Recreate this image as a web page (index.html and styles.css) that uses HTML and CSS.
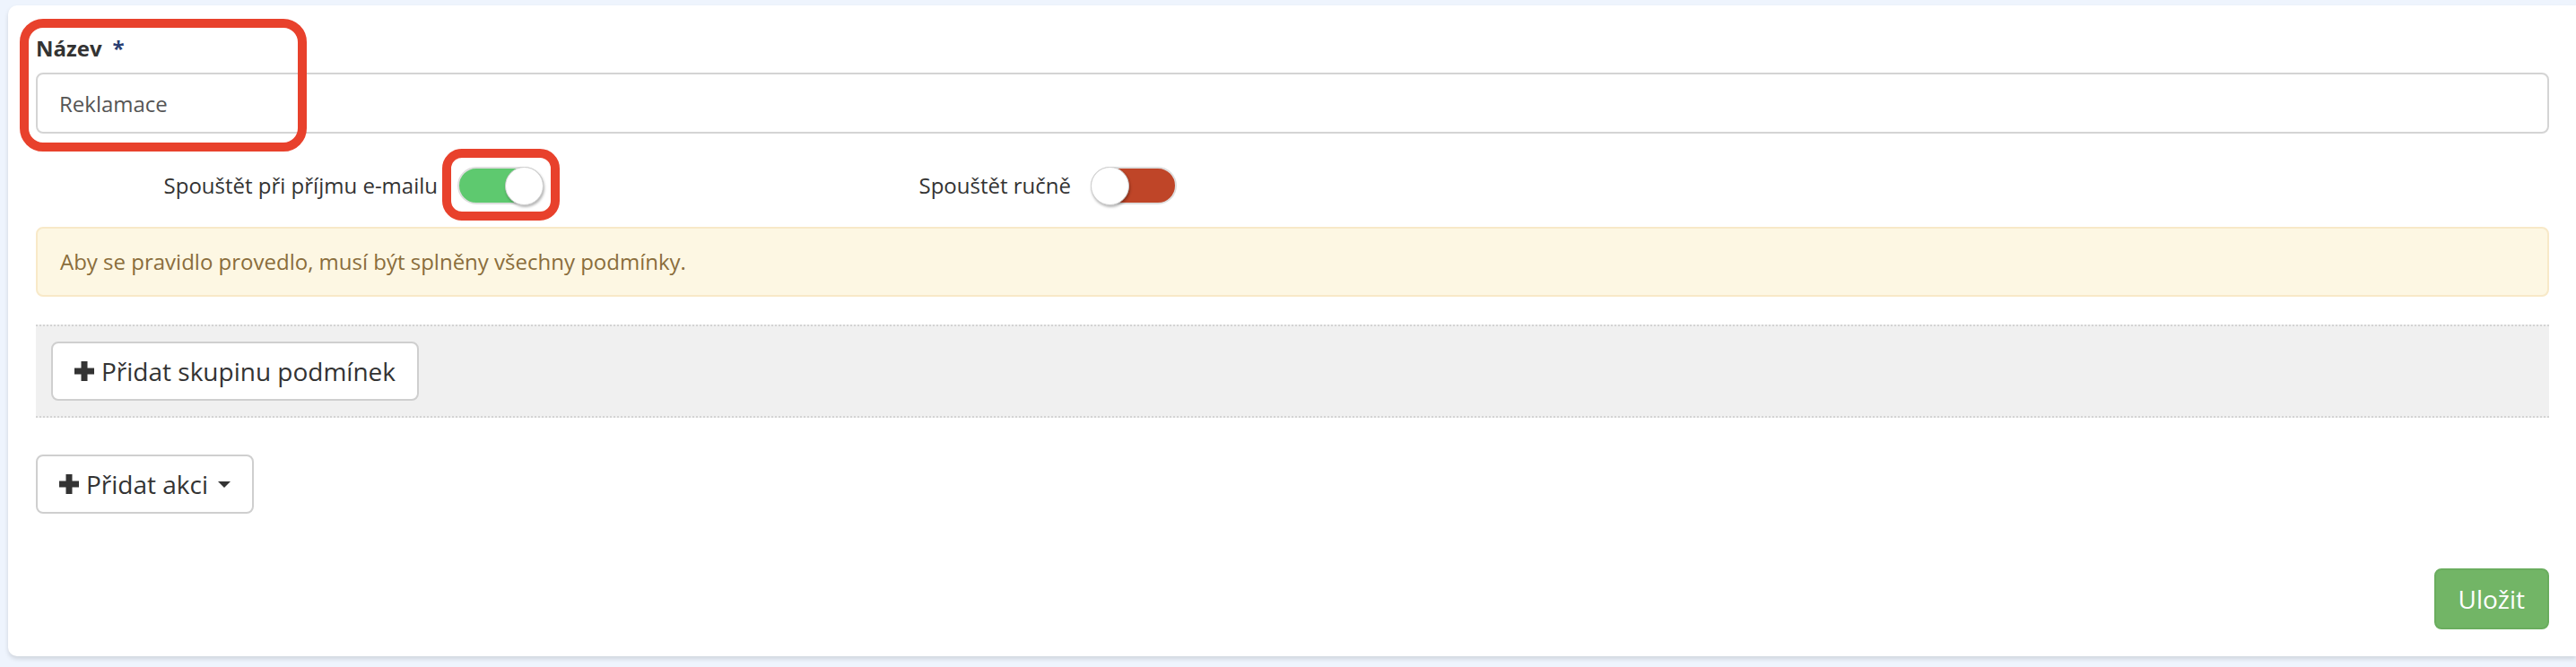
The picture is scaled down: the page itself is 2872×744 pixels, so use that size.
FILE: index.html
```html
<!DOCTYPE html>
<html lang="cs">
<head>
<meta charset="utf-8">
<title>Pravidlo</title>
<link rel="stylesheet" href="styles.css">
</head>
<body>
<div class="page">
  <div class="topline"></div>
  <div class="card">
    <div class="field">
      <label class="field-label">Název<span class="req">*</span></label>
      <input class="text-input" type="text" value="Reklamace">
    </div>

    <div class="switch-row">
      <div class="switch-group">
        <span class="switch-label">Spouštět při příjmu e-mailu</span>
        <span class="toggle on"><span class="knob"></span></span>
      </div>
      <div class="switch-group">
        <span class="switch-label">Spouštět ručně</span>
        <span class="toggle off"><span class="knob"></span></span>
      </div>
    </div>

    <div class="alert">Aby se pravidlo provedlo, musí být splněny všechny podmínky.</div>

    <div class="conditions">
      <button class="btn" type="button">
        <svg class="plus" viewBox="0 0 22 22" width="22" height="22"><rect x="7.5" y="0" width="7" height="22"/><rect x="0" y="7.5" width="22" height="7"/></svg>
        <span>Přidat skupinu podmínek</span>
      </button>
    </div>

    <div class="actions">
      <button class="btn" type="button">
        <svg class="plus" viewBox="0 0 22 22" width="22" height="22"><rect x="7.5" y="0" width="7" height="22"/><rect x="0" y="7.5" width="22" height="7"/></svg>
        <span>Přidat akci</span>
        <span class="caret"></span>
      </button>
    </div>

    <div class="footer">
      <button class="btn btn-success" type="button">Uložit</button>
    </div>

    <div class="mark mark-name"></div>
    <div class="mark mark-toggle"></div>
  </div>
</div>
</body>
</html>
```
FILE: styles.css
```css
* { box-sizing: border-box; }

html, body {
  margin: 0;
  padding: 0;
  background: #eef4fd;
  font-family: "Open Sans", "Noto Sans", "Liberation Sans", sans-serif;
  color: #333;
}

.page {
  padding-left: 9px;
  min-height: 744px;
}

.topline {
  height: 7px;
  margin-left: 33px;
  border-bottom: 1px solid #cbddf8;
}

.card {
  position: relative;
  background: #fff;
  border-radius: 10px 0 0 10px;
  padding: 31px 30px 30px 31px;
  box-shadow: 0 3px 5px rgba(0, 0, 0, 0.13);
  margin-top: -1px;
}

.field-label {
  display: block;
  font-size: 24px;
  line-height: 34px;
  font-weight: 700;
  color: #333;
  margin-bottom: 10px;
}

.req {
  color: #2b3f72;
  margin-left: 12px;
}

.text-input {
  display: block;
  width: 100%;
  height: 68px;
  padding: 0 24px;
  border: 2px solid #d4d4d4;
  border-radius: 8px;
  font-family: inherit;
  font-size: 24px;
  color: #555;
  background: #fff;
  outline: none;
}

.switch-row {
  display: flex;
  align-items: center;
  margin-top: 37px;
  height: 42px;
}

.switch-group {
  width: 706px;
  display: flex;
  align-items: center;
  gap: 22px;
}

.switch-label {
  width: 448px;
  text-align: right;
  font-size: 24px;
  line-height: 34px;
  color: #333;
}

.toggle {
  position: relative;
  display: block;
  width: 96px;
  height: 42px;
  border-radius: 21px;
  border: 2px solid #dedede;
}

.toggle.on { background: #5ec96f; }
.toggle.off { background: #bf4528; }

.knob {
  position: absolute;
  top: -2px;
  width: 43px;
  height: 43px;
  border-radius: 50%;
  background: #fff;
  border: 1px solid #d0d0d0;
  box-shadow: 1px 2px 3px rgba(0, 0, 0, 0.3);
}

.toggle.on .knob { right: -2px; }
.toggle.off .knob { left: -2px; }

.alert {
  margin-top: 25px;
  padding: 20px 25px;
  border: 2px solid #f8e9c8;
  border-radius: 8px;
  background: #fdf7e3;
  color: #8a6d3b;
  font-size: 24px;
  line-height: 34px;
}

.conditions {
  margin-top: 31px;
  background: #f0f0f0;
  border-top: 2px dotted #d4d4d4;
  border-bottom: 2px dotted #d4d4d4;
  padding: 17px 17px;
}

.btn {
  display: inline-flex;
  align-items: center;
  font-family: inherit;
  font-size: 28px;
  line-height: 40px;
  padding: 11px 24px;
  border: 2px solid #cfcfcf;
  border-radius: 8px;
  background: #fff;
  color: #333;
  cursor: pointer;
}

.plus {
  fill: #333;
  margin-right: 8px;
  flex: none;
}

.caret {
  display: inline-block;
  width: 0;
  height: 0;
  margin-left: 11px;
  border-top: 7px solid #333;
  border-left: 7px solid transparent;
  border-right: 7px solid transparent;
}

.actions {
  margin-top: 41px;
}

.footer {
  margin-top: 61px;
  display: flex;
  justify-content: flex-end;
}

.btn-success {
  background: #72b566;
  border-color: #6aad5e;
  color: #fff;
  padding: 12px 25px;
}

.mark {
  position: absolute;
  border: 10px solid #e8412c;
  pointer-events: none;
}

.mark-name {
  left: 13px;
  top: 15px;
  width: 320px;
  height: 148px;
  border-radius: 26px;
}

.mark-toggle {
  left: 484px;
  top: 160px;
  width: 131px;
  height: 80px;
  border-radius: 22px;
}
```
